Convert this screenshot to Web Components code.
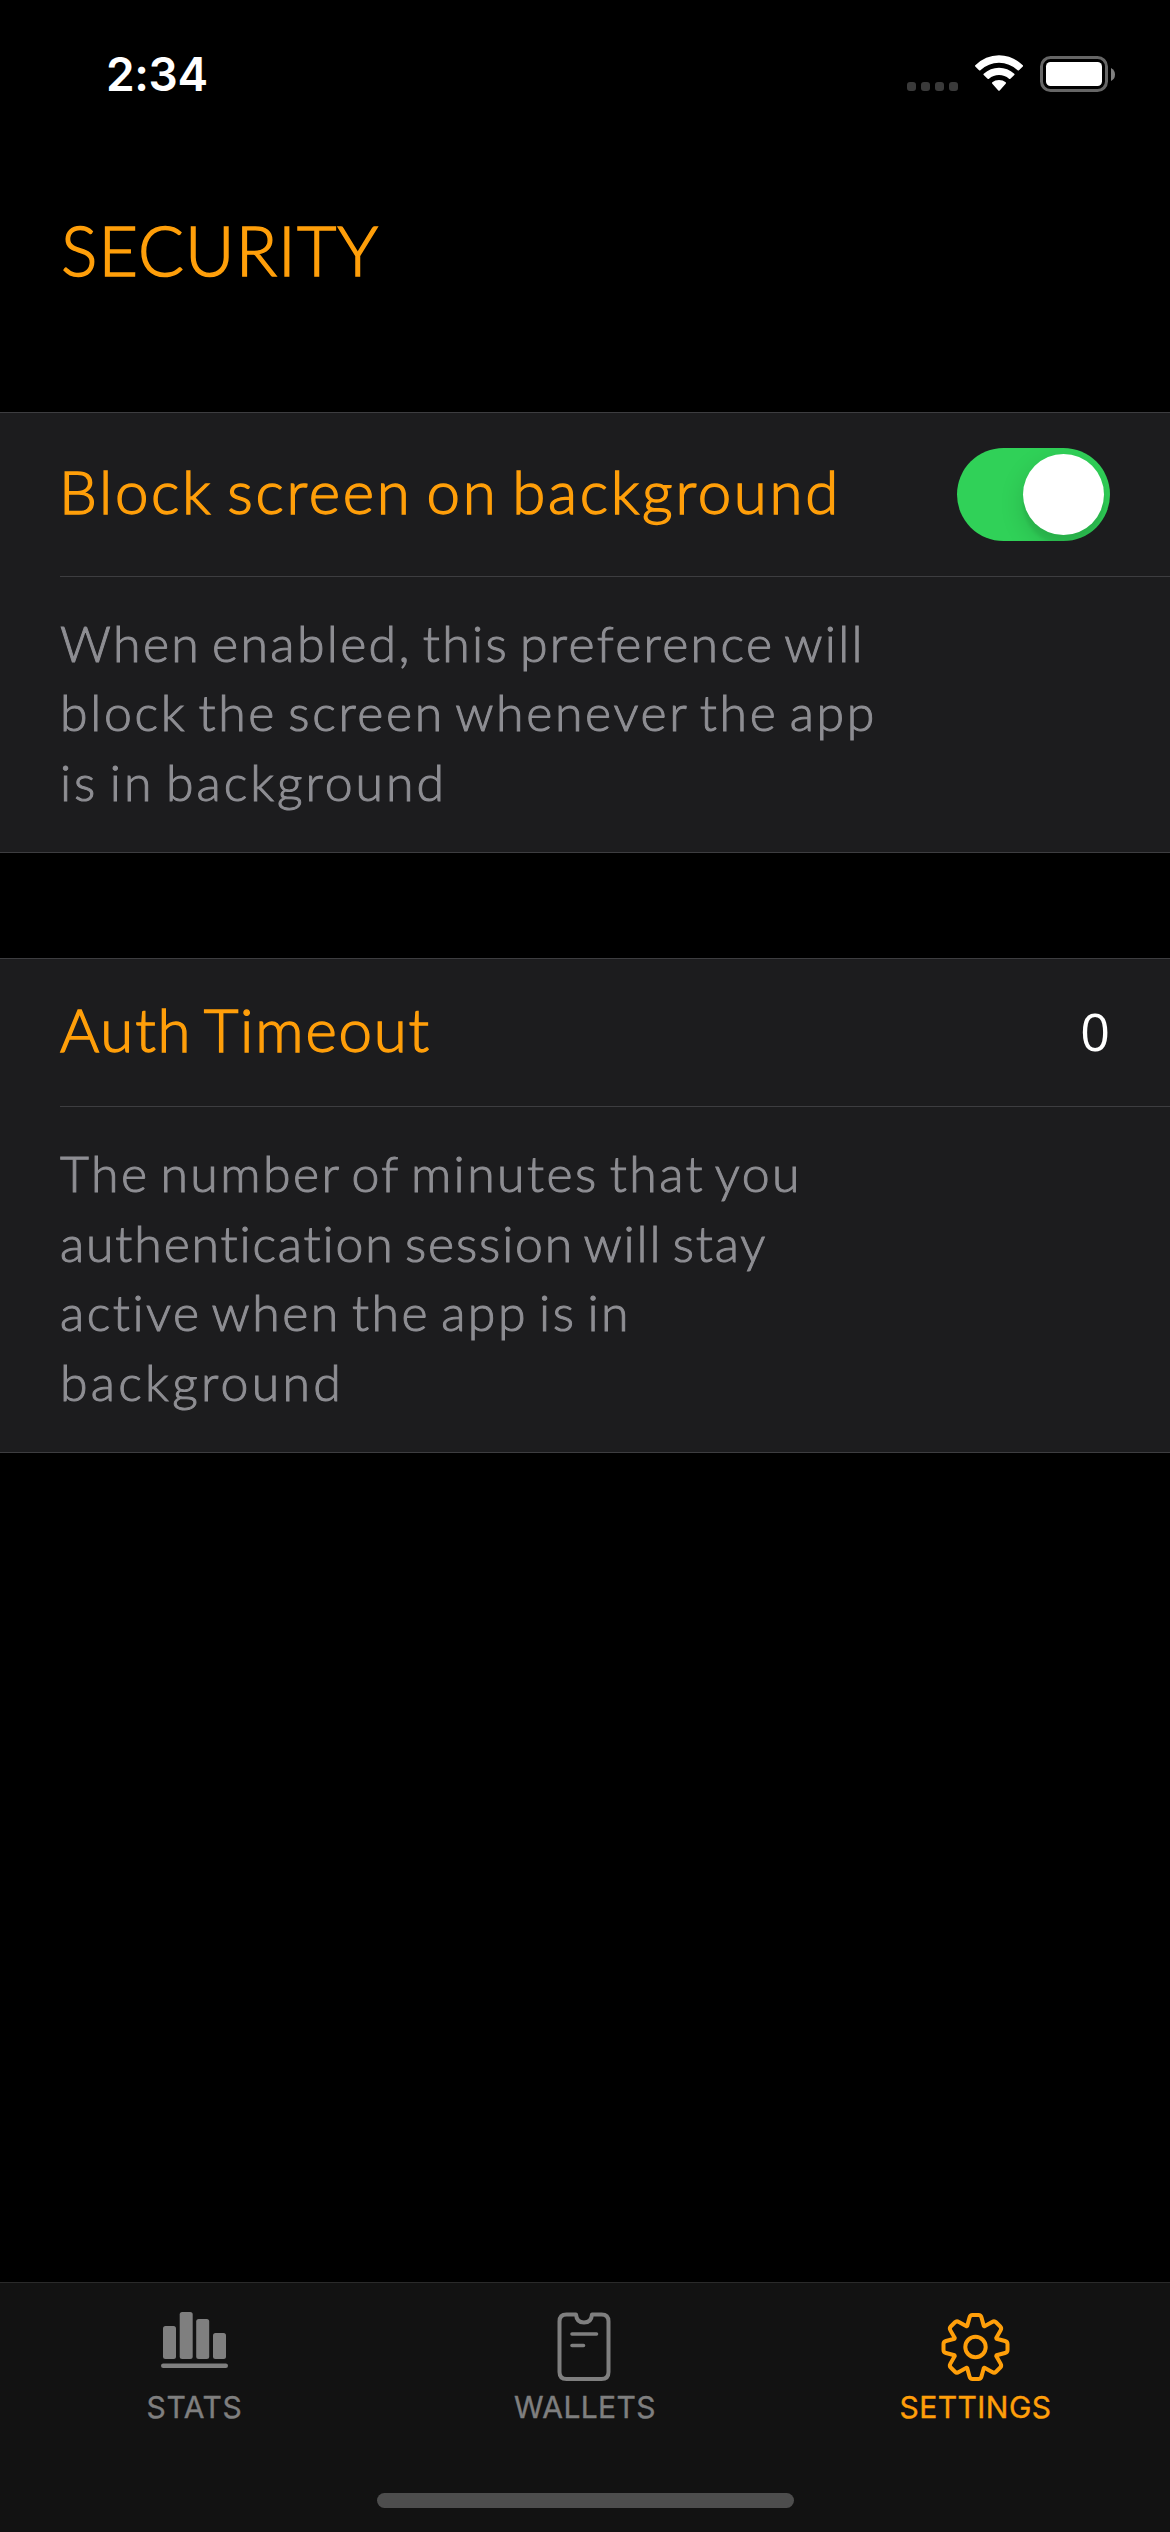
<!DOCTYPE html>
<html lang="en">
<head>
<meta charset="utf-8">
<title>Security</title>
<style>
html,body{margin:0;background:#000}
body{width:1170px;height:2532px;overflow:hidden;font-family:Lato,"Open Sans",sans-serif;color:#fff}
</style>
</head>
<body>
<app-screen>
  <status-bar slot="status" time="2:34"></status-bar>
  <h-title slot="header"><fit-text width="318">SECURITY</fit-text></h-title>
  <setting-group style="--gap:31.500px;--row:163px;--body:275px">
    <fit-text slot="label" width="782" style="margin-left:-1px">Block screen on background</fit-text>
    <toggle-switch slot="value"></toggle-switch>
    <fit-text slot="text" width="805">When enabled, this preference will</fit-text>
    <fit-text slot="text" width="817">block the screen whenever the app</fit-text>
    <fit-text slot="text" width="387">is in background</fit-text>
  </setting-group>
  <setting-group style="--gap:32px;--row:147px;--body:345px">
    <fit-text slot="label" width="371">Auth Timeout</fit-text>
    <span slot="value">0</span>
    <fit-text slot="text" width="742">The number of minutes that you</fit-text>
    <fit-text slot="text" width="709">authentication session will stay</fit-text>
    <fit-text slot="text" width="572">active when the app is in</fit-text>
    <fit-text slot="text" width="284">background</fit-text>
  </setting-group>
  <tab-bar slot="tabs">
    <tab-item icon="stats"><fit-text width="96">STATS</fit-text></tab-item>
    <tab-item icon="wallets"><fit-text width="142">WALLETS</fit-text></tab-item>
    <tab-item icon="settings" active><fit-text width="152">SETTINGS</fit-text></tab-item>
  </tab-bar>
</app-screen>
<script>
const define = (name, html, setup) => customElements.define(name, class extends HTMLElement {
  connectedCallback() {
    if (this.shadowRoot) return;
    this.attachShadow({mode: 'open'}).innerHTML = html;
    if (setup) setup(this, this.shadowRoot);
  }
});

define('app-screen', `<style>
:host{display:flex;flex-direction:column;width:1170px;height:2532px;background:#000}
main{flex:1;display:flex;flex-direction:column;gap:105px}
</style><slot name="status"></slot><slot name="header"></slot><main><slot></slot></main><slot name="tabs"></slot>`);

define('status-bar', `<style>
:host{display:flex;justify-content:space-between;height:141px;box-sizing:border-box;padding:0 54px 0 106px}
.t{font:600 46px/56px Inter,sans-serif;padding-top:46px;letter-spacing:-.4px}
svg{display:block;margin-top:50px}
</style><div class="t"></div>
<svg width="212" height="46" viewBox="904 50 212 46">
<g fill="#3a3a3a"><rect x="907" y="82" width="9" height="9" rx="3"/><rect x="921" y="82" width="9" height="9" rx="3"/><rect x="935" y="82" width="9" height="9" rx="3"/><rect x="949" y="82" width="9" height="9" rx="3"/></g>
<g fill="#fff"><path d="M975.3 65.2Q985.5 55.2 999 55.2T1022.800 65.200Q1023.400 65.900 1022.800 66.500L1019 70.200Q1018.300 70.800 1017.600 70.200Q1009.500 62.700 999 62.700T980.400 70.200Q979.700 70.800 979 70.200L975.300 66.500Q974.700 65.900 975.300 65.200Z"/><path d="M983.700 73.700Q990.300 67.700 999 67.700T1014.300 73.700Q1015 74.400 1014.300 75L1010.400 78.800Q1009.700 79.400 1009 78.800Q1004.700 75.100 999 75.100T989 78.800Q988.300 79.400 987.600 78.800L983.700 75Q983 74.400 983.700 73.700Z"/><path d="M992.300 82.300Q995 80.100 999 80.100T1005.700 82.300Q1006.400 83 1005.700 83.700L999.700 90.400Q999 91.100 998.300 90.400L992.300 83.700Q991.600 83 992.300 82.300Z"/></g>
<rect x="1041.500" y="57.500" width="65" height="33" rx="9" fill="none" stroke="#666" stroke-width="3"/>
<rect x="1046" y="62" width="56" height="24" rx="4.500" fill="#fff"/>
<path d="M1111 68Q1115 70 1115 74.500T1111 81Z" fill="#808080"/>
</svg>`, (el, r) => r.querySelector('.t').textContent = el.getAttribute('time'));

define('h-title', `<style>
:host{display:block;height:271px;box-sizing:border-box;padding:69px 0 0 61px;font-size:68px;font-weight:300;-webkit-text-stroke:1.500px currentColor;line-height:80px;color:#ff9f0a}
</style><slot></slot>`);

define('fit-text', `<style>
:host{display:block;white-space:pre}
span{display:inline-block}
</style><span><slot></slot></span>`, (el, r) => {
  const s = r.querySelector('span'), n = el.textContent.length;
  requestAnimationFrame(() => {
    s.style.letterSpacing = ((+el.getAttribute('width') - s.getBoundingClientRect().width) / n).toFixed(3) + 'px';
  });
});

define('setting-group', `<style>
:host{display:block;background:#1c1c1e;border:solid #3d3d40;border-width:1px 0;word-spacing:-5px}
header{height:var(--row);margin-left:60px;padding-right:60px;display:flex;align-items:center;justify-content:space-between;border-bottom:1px solid #3d3d40}
.l{font-size:60px;font-weight:300;-webkit-text-stroke:1.400px currentColor;line-height:72px;color:#ff9f0a;padding-bottom:7px}
.v{font:400 52px/62px "Open Sans",sans-serif;color:#fff;padding-bottom:var(--lift,0)}
.b{height:var(--body);box-sizing:border-box;padding:var(--gap) 0 0 60px;font-size:50px;font-weight:300;-webkit-text-stroke:1px currentColor;line-height:69.500px;color:#8e8e93}
::slotted(span){display:block;padding-bottom:3px}
</style><header><div class="l"><slot name="label"></slot></div><div class="v"><slot name="value"></slot></div></header><div class="b"><slot name="text"></slot></div>`);

define('toggle-switch', `<style>
:host{display:flex;justify-content:flex-end;align-items:center;width:153px;height:93px;box-sizing:border-box;padding:6px;border-radius:47px;background:#30d158;overflow:hidden}
i{width:81px;height:81px;border-radius:50%;background:#fff;box-shadow:0 9px 24px rgba(0,0,0,.15),0 9px 3px rgba(0,0,0,.06)}
</style><i></i>`);

define('tab-bar', `<style>
:host{display:flex;flex-direction:column;align-items:center;justify-content:space-between;height:250px;box-sizing:border-box;border-top:1px solid #2a2a2a;background:#121212;padding-bottom:24px}
nav{display:flex;width:100%;justify-content:space-between}
i{width:417px;height:15px;border-radius:8px;background:#4d4d4d}
</style><nav><slot></slot></nav><i></i>`);

const gear = () => {
  let d = '';
  for (let k = 0; k < 8; k++) {
    const a = k * Math.PI / 4, c = Math.cos(a), s = Math.sin(a);
    const p = (x, y) => (x * c - y * s + 34.5).toFixed(2) + ' ' + (x * s + y * c + 35).toFixed(2);
    d += (k ? 'L' : 'M') + p(-8.3, -21) + 'L' + p(-6, -29.5) + 'Q' + p(-5.3, -32) + ' ' + p(-3, -32) + 'L' + p(3, -32) + 'Q' + p(5.3, -32) + ' ' + p(6, -29.5) + 'L' + p(8.3, -21);
  }
  return `<g fill="none" stroke="currentColor" stroke-width="4" stroke-linejoin="round"><path d="${d}Z"/><circle cx="34.500" cy="35" r="10.200"/></g>`;
};
const icons = {
  stats: `<g fill="currentColor"><rect x="3" y="14" width="13" height="33" rx="2.500"/><rect x="19.700" y="0" width="13" height="47" rx="2.500"/><rect x="36.200" y="7" width="13" height="40" rx="2.500"/><rect x="53" y="21" width="13" height="26" rx="2.500"/><rect x="1" y="51.500" width="67" height="4.500" rx="2.200"/></g>`,
  wallets: `<g transform="translate(-1 0)" fill="none" stroke="currentColor" stroke-width="4" stroke-linecap="round" stroke-linejoin="round"><path d="M27 2.500H17.500Q10.500 2.500 10.500 9.500V60Q10.500 67 17.500 67H52.500Q59.500 67 59.500 60V9.500Q59.500 2.500 52.500 2.500H43C42.500 8.500 39.800 10.500 35 10.500S27.500 8.500 27 2.500Z"/><path stroke-width="3.600" d="M23 22H47.500M23 33.500H34.500"/></g>`,
  settings: gear()
};
define('tab-item', `<style>
:host{display:flex;flex-direction:column;align-items:center;width:389px;padding-top:29px;color:#7f7f7f;font:400 30px/36px Inter,sans-serif;-webkit-text-stroke:.4px currentColor}
:host([active]){color:#ff9f0a}
svg{display:block;margin-bottom:7px;overflow:visible}
</style><svg width="70" height="70" viewBox="0 0 70 70"></svg><slot></slot>`, (el, r) => {
  r.querySelector('svg').innerHTML = icons[el.getAttribute('icon')];
});
</script>
</body>
</html>
